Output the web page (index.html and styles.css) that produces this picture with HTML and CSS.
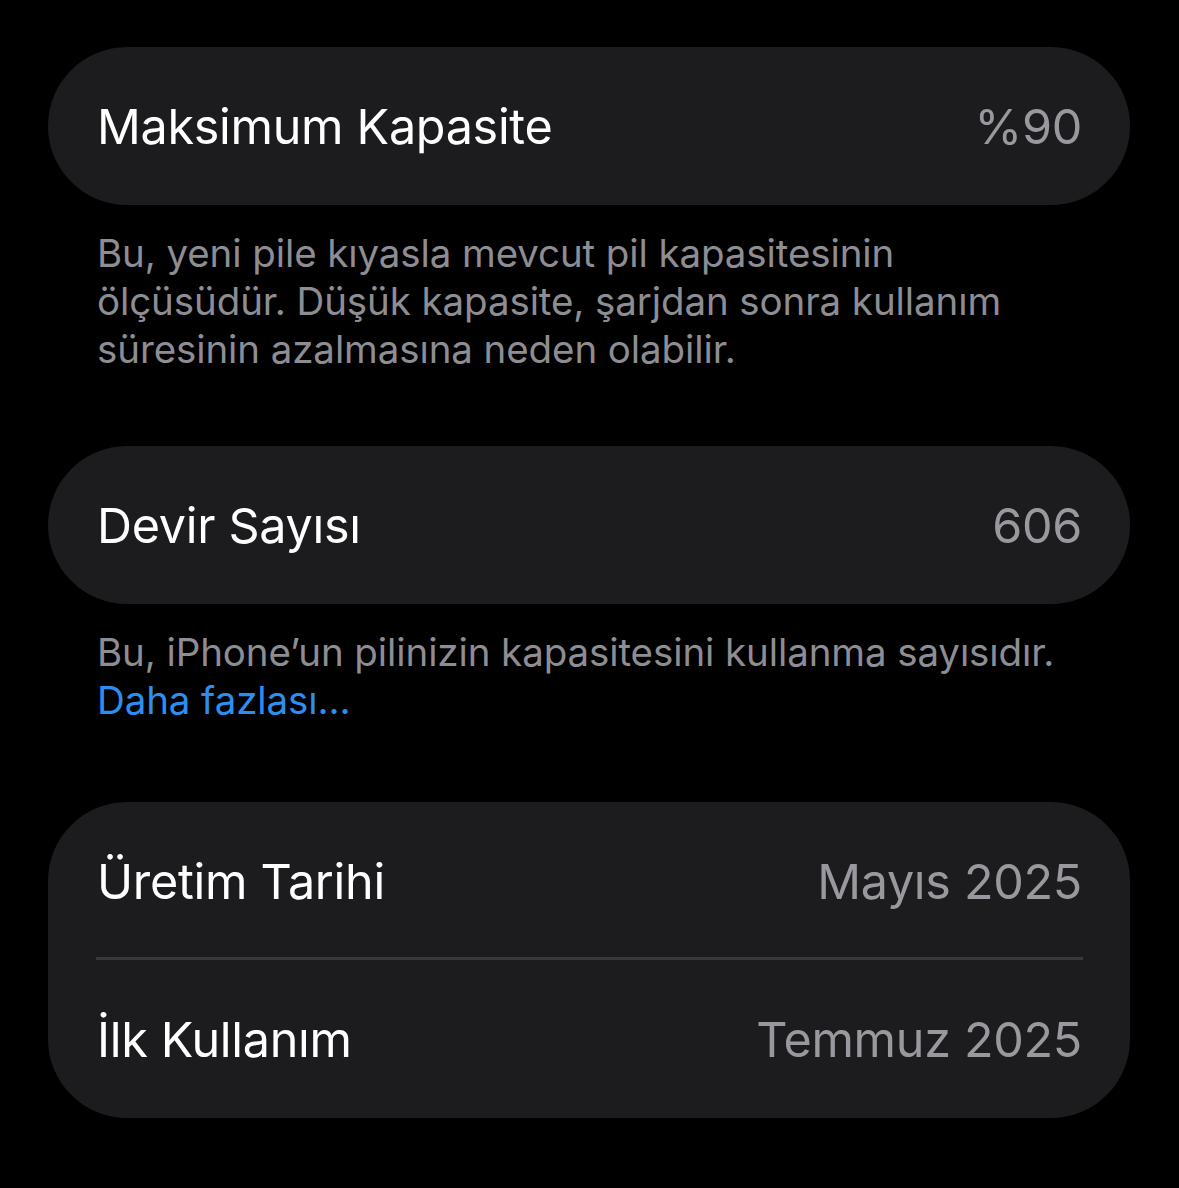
FILE: index.html
```html
<!DOCTYPE html>
<html lang="tr">
<head>
<meta charset="utf-8">
<link rel="stylesheet" href="styles.css">
</head>
<body>
<main class="page">
  <section class="card">
    <div class="row"><span class="label">Maksimum Kapasite</span><span class="value">%90</span></div>
  </section>
  <p class="footer">Bu, yeni pile kıyasla mevcut pil kapasitesinin<br>ölçüsüdür. Düşük kapasite, şarjdan sonra kullanım<br>süresinin azalmasına neden olabilir.</p>

  <section class="card">
    <div class="row"><span class="label">Devir Sayısı</span><span class="value">606</span></div>
  </section>
  <p class="footer footer-link">Bu, iPhone’un pilinizin kapasitesini kullanma sayısıdır.<br><a class="link" href="#">Daha fazlası...</a></p>

  <section class="card">
    <div class="row"><span class="label">Üretim Tarihi</span><span class="value">Mayıs 2025</span></div>
    <div class="sep"></div>
    <div class="row"><span class="label">İlk Kullanım</span><span class="value">Temmuz 2025</span></div>
  </section>
</main>
</body>
</html>
```
FILE: styles.css
```css
html, body {
  margin: 0;
  padding: 0;
  background: #000;
}
body {
  width: 1179px;
  height: 1188px;
  overflow: hidden;
  font-family: Inter, "Noto Sans", sans-serif;
  -webkit-font-smoothing: antialiased;
}
.page {
  padding: 47px 49px 0 48px;
  display: flex;
  flex-direction: column;
}
.card {
  background: #1c1c1e;
  border-radius: 79px;
  display: flex;
  flex-direction: column;
}
.row {
  height: 158px;
  display: flex;
  align-items: center;
  justify-content: space-between;
  padding: 0 48px 0 49px;
}
.label {
  color: #ffffff;
  font-size: 48.5px;
  letter-spacing: -0.3px;
}
.value {
  color: #98989f;
  font-size: 48.5px;
  letter-spacing: -0.3px;
}
.sep {
  height: 3px;
  background: #38383a;
  margin: -3px 47px 0 48px;
}
.footer {
  margin: 0;
  padding: 24px 0 73px 49px;
  color: #8d8d93;
  font-size: 38.5px;
  line-height: 48px;
  letter-spacing: -0.1px;
}
.footer-link {
  padding: 24px 0 78px 49px;
}
.link {
  color: #2e8ef0;
  text-decoration: none;
}
```
